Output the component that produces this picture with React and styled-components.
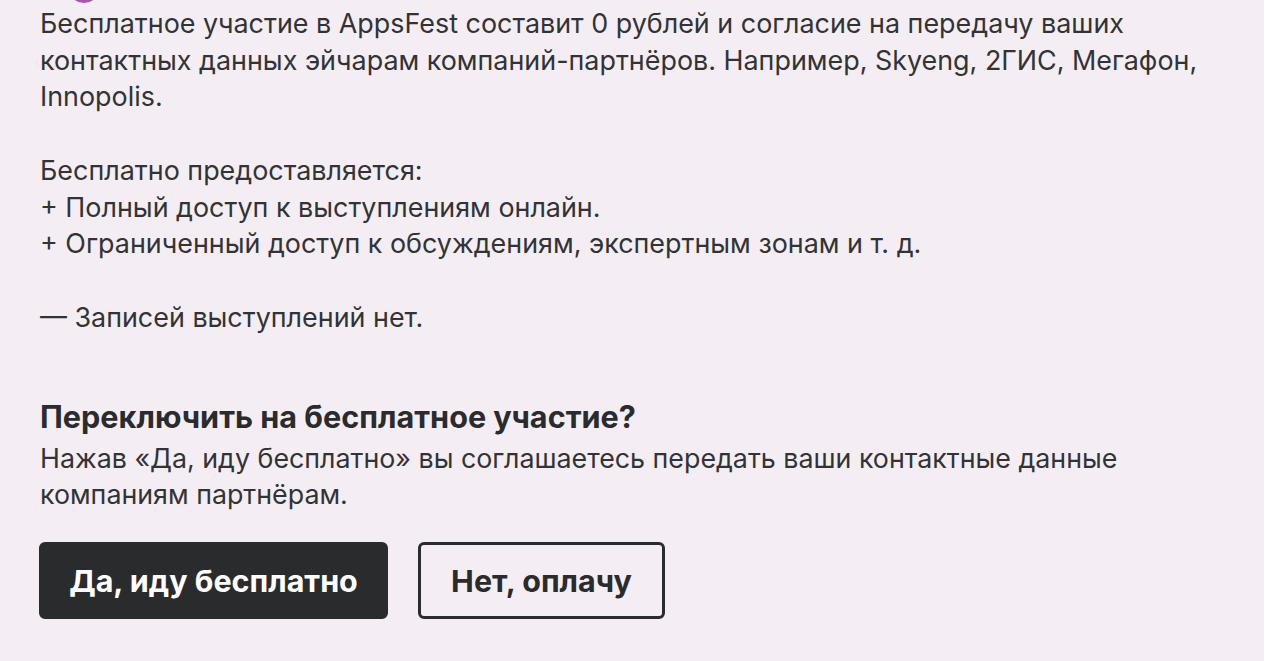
import React from "react";
import styled, { createGlobalStyle } from "styled-components";

const Global = createGlobalStyle`
  html, body { margin: 0; padding: 0; background: #ffffff; }
  body { font-family: Inter, "Noto Sans", sans-serif; }
`;

const Panel = styled.div`
  width: 1264px;
  height: 661px;
  box-sizing: border-box;
  background: #f4eef4;
  padding: 0 40px 0 39px;
  overflow: hidden;
  display: flex;
  flex-direction: column;
`;

const AvatarStub = styled.div`
  height: 3px;
  position: relative;
  overflow: hidden;
  margin-bottom: 2px;
`;

const AvatarCircle = styled.div`
  position: absolute;
  left: 29px;
  bottom: 0;
  width: 32px;
  height: 32px;
  border-radius: 50%;
  background: #a257b6;
`;

const Body = styled.div`
  font-family: Inter, sans-serif;
  font-size: 26.9px;
  line-height: 36.7px;
  color: #333335;
  padding-left: 1px;
`;

const Line = styled.div`
  min-height: 36.7px;
  white-space: nowrap;
`;

const Question = styled.div`
  margin-top: 67px;
  padding-left: 1px;
  display: flex;
  flex-direction: column;
`;

const Heading = styled.div`
  font-family: Inter, sans-serif;
  font-weight: 700;
  font-size: 30.6px;
  line-height: 36px;
  color: #2b2b2d;
  margin-top: -3px;
  margin-bottom: 3px;
`;

const Note = styled.div`
  font-family: Inter, sans-serif;
  font-size: 26.8px;
  line-height: 36px;
  color: #333335;
  margin-top: 2px;
  white-space: nowrap;
`;

const Actions = styled.div`
  display: flex;
  gap: 30px;
  margin-top: 30px;
`;

const Button = styled.button`
  box-sizing: border-box;
  height: 77px;
  border-radius: 6px;
  font-family: Inter, sans-serif;
  font-weight: 700;
  font-size: 30.5px;
  cursor: pointer;
  border: 3px solid #2a2b2d;
  background: ${(p) => (p.$primary ? "#2a2b2d" : "transparent")};
  color: ${(p) => (p.$primary ? "#ffffff" : "#2a2b2d")};
  width: ${(p) => (p.$primary ? 349 : 247)}px;
  padding: 0;
`;

export default function App() {
  return (
    <>
      <Global />
      <Panel>
        <AvatarStub>
          <AvatarCircle />
        </AvatarStub>
        <Body>
          <Line>Бесплатное участие в AppsFest составит 0 рублей и согласие на передачу ваших</Line>
          <Line>контактных данных эйчарам компаний-партнёров. Например, Skyeng, 2ГИС, Мегафон,</Line>
          <Line>Innopolis.</Line>
          <Line />
          <Line>Бесплатно предоставляется:</Line>
          <Line>+ Полный доступ к выступлениям онлайн.</Line>
          <Line>+ Ограниченный доступ к обсуждениям, экспертным зонам и т. д.</Line>
          <Line />
          <Line>— Записей выступлений нет.</Line>
        </Body>
        <Question>
          <Heading>Переключить на бесплатное участие?</Heading>
          <Note>
            Нажав «Да, иду бесплатно» вы соглашаетесь передать ваши контактные данные
            <br />
            компаниям партнёрам.
          </Note>
        </Question>
        <Actions>
          <Button $primary>Да, иду бесплатно</Button>
          <Button>Нет, оплачу</Button>
        </Actions>
      </Panel>
    </>
  );
}
